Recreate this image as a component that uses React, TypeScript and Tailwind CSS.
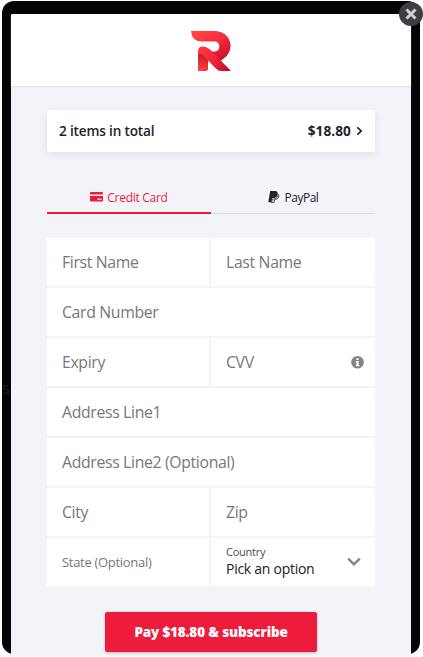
import React from 'react';

function Logo() {
  return (
    <svg width="40" height="40" viewBox="0 0 40 40" aria-label="R">
      <defs>
        <linearGradient id="bowl" gradientUnits="userSpaceOnUse" x1="8" y1="0" x2="30" y2="30">
          <stop offset="0" stopColor="#ff4444" />
          <stop offset="0.5" stopColor="#f92c3b" />
          <stop offset="1" stopColor="#c9122e" />
        </linearGradient>
        <linearGradient id="leg" gradientUnits="userSpaceOnUse" x1="9" y1="17" x2="37" y2="40">
          <stop offset="0" stopColor="#ff3842" />
          <stop offset="0.5" stopColor="#f5263b" />
          <stop offset="1" stopColor="#c00c2c" />
        </linearGradient>
        <linearGradient id="stem" gradientUnits="userSpaceOnUse" x1="15" y1="24" x2="8" y2="40">
          <stop offset="0" stopColor="#c71a2c" />
          <stop offset="1" stopColor="#ff4444" />
        </linearGradient>
      </defs>
      <path d="M7 19V40H15Q17 40 17 38V25Z" fill="url(#stem)" />
      <path d="M0 0H25A15 15 0 0 1 32 28L28 31L18 20.500H24.500A5.200 5.200 0 0 0 24.500 10.500H10.500Q1 10.500 0 0Z" fill="url(#bowl)" />
      <path d="M7 23V20.500Q7 15.500 12 15.500Q15.500 15.500 19 18.500L40 40H30Q27.500 40 25.500 38L12 24.500Q9 21.500 7 23Z" fill="url(#leg)" />
    </svg>
  );
}

function CardIcon() {
  return (
    <svg width="13" height="10" viewBox="0 0 13 10" className="shrink-0">
      <path d="M1 0H12Q13 0 13 1V2.500H0V1Q0 0 1 0Z" fill="currentColor" />
      <path d="M0 4H13V8.500Q13 9.500 12 9.500H1Q0 9.500 0 8.500Z" fill="currentColor" />
      <path d="M7.500 6.500H11.500V8H7.500Z" fill="#f3f4f9" opacity=".8" />
    </svg>
  );
}

function PayPalIcon() {
  return (
    <svg width="12" height="13" viewBox="0 0 12 13" className="shrink-0">
      <path
        d="M2.200 0H7Q10 0 9.700 3Q9.200 6.900 5.300 7.100H4.200L3.400 11.300H.3Z"
        fill="currentColor"
      />
      <path
        d="M10 3.200Q11.400 4.200 10.700 6.200Q10 8.300 7.300 8.500H6.600L6 11.700H3.500L4.200 7.900H5.600Q9.600 7.800 10 3.200Z"
        fill="#d5d6da"
        stroke="currentColor"
        strokeWidth=".7"
      />
    </svg>
  );
}

function Field({ label, wide = false, small = false, children }: { label: string; wide?: boolean; small?: boolean; children?: React.ReactNode }) {
  return (
    <div className={`flex h-12 items-center bg-white pr-[11px] pl-[15px] ${wide ? 'col-span-2' : ''}`}>
      <span className={`grow whitespace-nowrap text-[#777779] ${small ? 'pt-px text-[13px] tracking-[-0.3px]' : 'pt-[2px] text-[15.800px] tracking-[-0.34px]'}`}>{label}</span>
      {children}
    </div>
  );
}

export default function App() {
  return (
    <div className="relative h-[657px] w-[423px] overflow-hidden bg-white font-['Open_Sans','Noto_Sans',sans-serif]">
      <div className="pt-px pl-[2px]">
        <div className="h-[653px] w-[418px] rounded-[12px] bg-[#050505] pt-[13px] pl-[9px]">
          <div className="h-[642px] w-[400px] rounded-t-[2px] bg-[#f3f4f9]">
            <header className="flex h-[72px] justify-center rounded-t-[2px] bg-white pt-[17px] shadow-[0_1px_1px_#dcdde2]">
              <Logo />
            </header>
            <main className="px-9 pt-6">
              <div className="flex h-[42px] items-center rounded-[2px] bg-white pr-[12px] pl-[12px] text-[13.600px] font-semibold tracking-[-0.17px] text-[#222328] shadow-[0_2px_8px_rgba(30,35,60,0.09)]">
                <span className="grow pt-px">2 items in total</span>
                <span className="pt-px font-bold tracking-[0.1px]">$18.80</span>
                <svg width="7" height="10" viewBox="0 0 7 10" className="ml-[5px]">
                  <path d="M1.300 1.300 5.200 5 1.300 8.700" fill="none" stroke="currentColor" strokeWidth="1.700" />
                </svg>
              </div>
              <nav className="mt-[30px] grid h-8 grid-cols-2 text-[12px] tracking-[-0.28px]">
                <div className="flex items-center justify-center gap-1 border-b-2 border-[#ed1c3c] text-[#ed1c3c]">
                  <CardIcon />
                  <span className="pt-px font-medium">Credit Card</span>
                </div>
                <div className="flex items-center justify-center gap-1 border-b border-[#dadce2] text-[#222328]">
                  <PayPalIcon />
                  <span className="pl-px tracking-[-0.5px]">PayPal</span>
                </div>
              </nav>
              <form className="mt-6 grid grid-cols-[162px_164px] gap-[2px]">
                <Field label="First Name" />
                <Field label="Last Name" />
                <Field label="Card Number" wide />
                <Field label="Expiry" />
                <Field label="CVV">
                  <svg width="13" height="13" viewBox="0 0 13 13">
                    <circle cx="6.500" cy="6.300" r="6.300" fill="#858587" />
                    <path d="M5.400 2.200H7.600V4.100H5.400ZM4.800 5.100H7.600V8.900H8.400V10.200H4.700V8.900H5.500V6.400H4.800Z" fill="white" />
                  </svg>
                </Field>
                <Field label="Address Line1" wide />
                <Field label="Address Line2 (Optional)" wide />
                <Field label="City" />
                <Field label="Zip" />
                <Field label="State (Optional)" small />
                <div className="flex h-12 items-center bg-white pr-[14px] pl-[15px]">
                  <div className="grow pb-[2px]">
                    <div className="text-[11px] leading-[14px] tracking-[-0.25px] text-[#4c4c50]">Country</div>
                    <div className="pt-px text-[14px] leading-[18px] tracking-[-0.27px] text-[#202024]">Pick an option</div>
                  </div>
                  <svg width="14" height="10" viewBox="0 0 14 10">
                    <path d="M1.200 1.700 7 7.400 12.800 1.700" fill="none" stroke="#858587" strokeWidth="2.400" />
                  </svg>
                </div>
              </form>
              <button className="mx-auto mt-[26px] flex h-10 w-[212px] items-center justify-center rounded-[2px] bg-[#ed1c3c] pt-px text-[13.500px] font-extrabold tracking-[-0.15px] whitespace-nowrap text-white shadow-[0_1px_3px_rgba(0,0,0,0.25)]">
                Pay $18.80 &amp; subscribe
              </button>
            </main>
          </div>
        </div>
      </div>
      <span className="absolute top-[376px] left-[2px] text-[16px] text-[#1d1d1e]">s</span>
      <button className="absolute top-[2px] left-[399px] flex size-6 items-center justify-center rounded-full bg-[#3d3d46]">
        <svg width="12" height="12" viewBox="0 0 12 12">
          <path d="M1.500 1.500 10.500 10.500M10.500 1.500 1.500 10.500" stroke="#d0d0d0" strokeWidth="3" />
        </svg>
      </button>
    </div>
  );
}
